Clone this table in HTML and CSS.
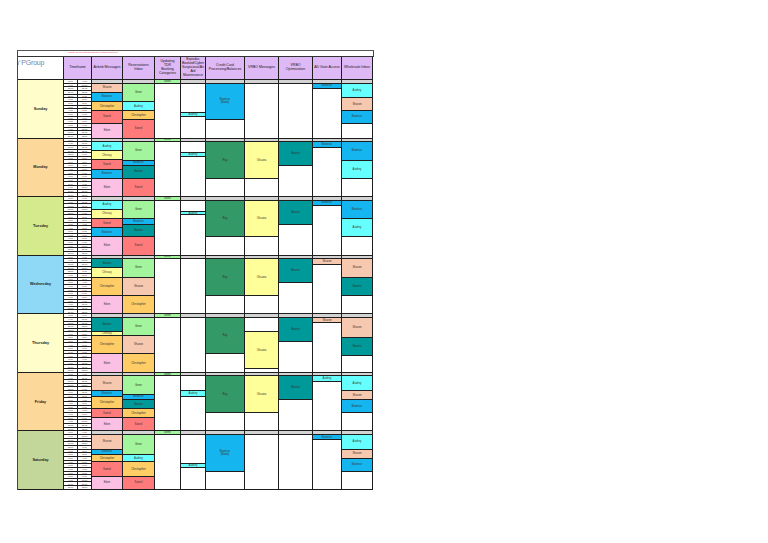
FILE: index.html
```html
<!DOCTYPE html>
<html lang="en">
<head>
<meta charset="utf-8">
<title>Weekly Inbox Schedule</title>
<link rel="stylesheet" href="styles.css">
</head>
<body>
<div class="page">
<div class="sheet">
  <div class="title-row"><span class="note">Please do not edit this schedule without approval</span></div>

  <div class="head cols">
    <div class="logo">
      <svg class="swoosh" viewBox="0 0 6 10" width="3" height="6"><path d="M1 9 L1 4 C1 1.5 3 0.8 5.5 1" fill="none" stroke="#6f88ab" stroke-width="1.1"/></svg>
      <span class="brand">PGroup</span>
    </div>
    <div>Timeframe</div>
    <div>Airbnb Messages</div>
    <div>Reservations<br>Inbox</div>
    <div>Updating<br>TDR<br>Booking<br>Categories</div>
    <div>Expedia:<br>Booked/Cyber<br>Suspicious/Air Aid<br>Maintenance</div>
    <div>Credit Card<br>Processing/Balances</div>
    <div>VRBO Messages</div>
    <div>VRBO<br>Optimization</div>
    <div>AD Gate Access</div>
    <div>Wholesale Inbox</div>
  </div>

  <!-- SUNDAY -->
  <div class="day cols">
    <div class="name sun">Sunday</div>
    <div class="times">
      <div class="t"><span>8:00</span><span>9:00</span></div><div class="t"><span>9:00</span><span>10:00</span></div><div class="t"><span>10:00</span><span>11:00</span></div><div class="t"><span>11:00</span><span>12:00</span></div><div class="t"><span>12:00</span><span>1:00</span></div><div class="t"><span>1:00</span><span>2:00</span></div><div class="t"><span>2:00</span><span>3:00</span></div><div class="t"><span>3:00</span><span>4:00</span></div><div class="t"><span>4:00</span><span>5:00</span></div><div class="t"><span>5:00</span><span>6:00</span></div><div class="t"><span>6:00</span><span>7:00</span></div><div class="t"><span>7:00</span><span>8:00</span></div><div class="t"><span>8:00</span><span>9:00</span></div><div class="t"><span>9:00</span><span>10:00</span></div><div class="t"><span>10:00</span><span>11:00</span></div><div class="t"><span>11:00</span><span>12:00</span></div>
    </div>
    <div class="col"><div class="c g s2"></div><div class="c pe s5">Sharon</div><div class="c bl s5">Beatrice</div><div class="c or s5">Christopher</div><div class="c rd s7">Saniel</div><div class="c pk s8">Eden</div></div>
    <div class="col"><div class="c g s2"></div><div class="c gn s10">Gene</div><div class="c cy s5">Audrey</div><div class="c or s5">Christopher</div><div class="c rd s10">Saniel</div></div>
    <div class="col"><div class="c gn s2">Gene</div><div class="c s30"></div></div>
    <div class="col"><div class="c g s2"></div><div class="c s16"></div><div class="c cy s2">Audrey</div><div class="c s12"></div></div>
    <div class="col"><div class="c g s2"></div><div class="c bl s20">Beatrice<br>(Book)</div><div class="c s10"></div></div>
    <div class="col"><div class="c g s2"></div><div class="c s30"></div></div>
    <div class="col"><div class="c g s2"></div><div class="c s30"></div></div>
    <div class="col"><div class="c g s2"></div><div class="c bl s3">Beatrice</div><div class="c s27"></div></div>
    <div class="col"><div class="c g s2"></div><div class="c cy s8">Audrey</div><div class="c pe s7">Sharon</div><div class="c bl s7">Beatrice</div><div class="c s8"></div></div>
  </div>

  <!-- MONDAY -->
  <div class="day cols">
    <div class="name mon">Monday</div>
    <div class="times">
      <div class="t"><span>8:00</span><span>9:00</span></div><div class="t"><span>9:00</span><span>10:00</span></div><div class="t"><span>10:00</span><span>11:00</span></div><div class="t"><span>11:00</span><span>12:00</span></div><div class="t"><span>12:00</span><span>1:00</span></div><div class="t"><span>1:00</span><span>2:00</span></div><div class="t"><span>2:00</span><span>3:00</span></div><div class="t"><span>3:00</span><span>4:00</span></div><div class="t"><span>4:00</span><span>5:00</span></div><div class="t"><span>5:00</span><span>6:00</span></div><div class="t"><span>6:00</span><span>7:00</span></div><div class="t"><span>7:00</span><span>8:00</span></div><div class="t"><span>8:00</span><span>9:00</span></div><div class="t"><span>9:00</span><span>10:00</span></div><div class="t"><span>10:00</span><span>11:00</span></div><div class="t"><span>11:00</span><span>12:00</span></div>
    </div>
    <div class="col"><div class="c g s2"></div><div class="c cy s5">Audrey</div><div class="c ye s5">Chrissy</div><div class="c rd s5">Saniel</div><div class="c bl s5">Beatrice</div><div class="c pk s10">Eden</div></div>
    <div class="col"><div class="c g s2"></div><div class="c gn s10">Gene</div><div class="c bl s3">Beatrice</div><div class="c te s7">Beatrix</div><div class="c rd s10">Saniel</div></div>
    <div class="col"><div class="c gn s2">Gene</div><div class="c s30"></div></div>
    <div class="col"><div class="c g s2"></div><div class="c s6"></div><div class="c cy s2">Audrey</div><div class="c s22"></div></div>
    <div class="col"><div class="c g s2"></div><div class="c dg s20">Ray</div><div class="c s10"></div></div>
    <div class="col"><div class="c g s2"></div><div class="c ye s20">Oksana</div><div class="c s10"></div></div>
    <div class="col"><div class="c g s2"></div><div class="c te s13">Beatrix</div><div class="c s17"></div></div>
    <div class="col"><div class="c g s2"></div><div class="c bl s3">Beatrice</div><div class="c s27"></div></div>
    <div class="col"><div class="c g s2"></div><div class="c bl s10">Beatrice</div><div class="c cy s10">Audrey</div><div class="c s10"></div></div>
  </div>

  <!-- TUESDAY -->
  <div class="day cols">
    <div class="name tue">Tuesday</div>
    <div class="times">
      <div class="t"><span>8:00</span><span>9:00</span></div><div class="t"><span>9:00</span><span>10:00</span></div><div class="t"><span>10:00</span><span>11:00</span></div><div class="t"><span>11:00</span><span>12:00</span></div><div class="t"><span>12:00</span><span>1:00</span></div><div class="t"><span>1:00</span><span>2:00</span></div><div class="t"><span>2:00</span><span>3:00</span></div><div class="t"><span>3:00</span><span>4:00</span></div><div class="t"><span>4:00</span><span>5:00</span></div><div class="t"><span>5:00</span><span>6:00</span></div><div class="t"><span>6:00</span><span>7:00</span></div><div class="t"><span>7:00</span><span>8:00</span></div><div class="t"><span>8:00</span><span>9:00</span></div><div class="t"><span>9:00</span><span>10:00</span></div><div class="t"><span>10:00</span><span>11:00</span></div><div class="t"><span>11:00</span><span>12:00</span></div>
    </div>
    <div class="col"><div class="c g s2"></div><div class="c cy s5">Audrey</div><div class="c ye s5">Chrissy</div><div class="c rd s5">Saniel</div><div class="c bl s5">Beatrice</div><div class="c pk s10">Eden</div></div>
    <div class="col"><div class="c g s2"></div><div class="c gn s10">Gene</div><div class="c bl s3">Beatrice</div><div class="c te s7">Beatrix</div><div class="c rd s10">Saniel</div></div>
    <div class="col"><div class="c gn s2">Gene</div><div class="c s30"></div></div>
    <div class="col"><div class="c g s2"></div><div class="c s6"></div><div class="c cy s2">Audrey</div><div class="c s22"></div></div>
    <div class="col"><div class="c g s2"></div><div class="c dg s20">Ray</div><div class="c s10"></div></div>
    <div class="col"><div class="c g s2"></div><div class="c ye s20">Oksana</div><div class="c s10"></div></div>
    <div class="col"><div class="c g s2"></div><div class="c te s13">Beatrix</div><div class="c s17"></div></div>
    <div class="col"><div class="c g s2"></div><div class="c bl s3">Beatrice</div><div class="c s27"></div></div>
    <div class="col"><div class="c g s2"></div><div class="c bl s10">Beatrice</div><div class="c cy s10">Audrey</div><div class="c s10"></div></div>
  </div>

  <!-- WEDNESDAY -->
  <div class="day cols">
    <div class="name wed">Wednesday</div>
    <div class="times">
      <div class="t"><span>8:00</span><span>9:00</span></div><div class="t"><span>9:00</span><span>10:00</span></div><div class="t"><span>10:00</span><span>11:00</span></div><div class="t"><span>11:00</span><span>12:00</span></div><div class="t"><span>12:00</span><span>1:00</span></div><div class="t"><span>1:00</span><span>2:00</span></div><div class="t"><span>2:00</span><span>3:00</span></div><div class="t"><span>3:00</span><span>4:00</span></div><div class="t"><span>4:00</span><span>5:00</span></div><div class="t"><span>5:00</span><span>6:00</span></div><div class="t"><span>6:00</span><span>7:00</span></div><div class="t"><span>7:00</span><span>8:00</span></div><div class="t"><span>8:00</span><span>9:00</span></div><div class="t"><span>9:00</span><span>10:00</span></div><div class="t"><span>10:00</span><span>11:00</span></div><div class="t"><span>11:00</span><span>12:00</span></div>
    </div>
    <div class="col"><div class="c g s2"></div><div class="c te s5">Beatrix</div><div class="c ye s5">Chrissy</div><div class="c or s10">Christopher</div><div class="c pk s10">Eden</div></div>
    <div class="col"><div class="c g s2"></div><div class="c gn s10">Gene</div><div class="c pe s10">Sharon</div><div class="c or s10">Christopher</div></div>
    <div class="col"><div class="c gn s2">Gene</div><div class="c s30"></div></div>
    <div class="col"><div class="c g s2"></div><div class="c s30"></div></div>
    <div class="col"><div class="c g s2"></div><div class="c dg s20">Ray</div><div class="c s10"></div></div>
    <div class="col"><div class="c g s2"></div><div class="c ye s20">Oksana</div><div class="c s10"></div></div>
    <div class="col"><div class="c g s2"></div><div class="c te s13">Beatrix</div><div class="c s17"></div></div>
    <div class="col"><div class="c g s2"></div><div class="c pe s3">Sharon</div><div class="c s27"></div></div>
    <div class="col"><div class="c g s2"></div><div class="c pe s10">Sharon</div><div class="c te s10">Beatrix</div><div class="c s10"></div></div>
  </div>

  <!-- THURSDAY -->
  <div class="day cols">
    <div class="name thu">Thursday</div>
    <div class="times">
      <div class="t"><span>8:00</span><span>9:00</span></div><div class="t"><span>9:00</span><span>10:00</span></div><div class="t"><span>10:00</span><span>11:00</span></div><div class="t"><span>11:00</span><span>12:00</span></div><div class="t"><span>12:00</span><span>1:00</span></div><div class="t"><span>1:00</span><span>2:00</span></div><div class="t"><span>2:00</span><span>3:00</span></div><div class="t"><span>3:00</span><span>4:00</span></div><div class="t"><span>4:00</span><span>5:00</span></div><div class="t"><span>5:00</span><span>6:00</span></div><div class="t"><span>6:00</span><span>7:00</span></div><div class="t"><span>7:00</span><span>8:00</span></div><div class="t"><span>8:00</span><span>9:00</span></div><div class="t"><span>9:00</span><span>10:00</span></div><div class="t"><span>10:00</span><span>11:00</span></div><div class="t"><span>11:00</span><span>12:00</span></div>
    </div>
    <div class="col"><div class="c g s2"></div><div class="c te s8">Beatrix</div><div class="c ye s2">Chrissy</div><div class="c or s10">Christopher</div><div class="c pk s10">Eden</div></div>
    <div class="col"><div class="c g s2"></div><div class="c gn s10">Gene</div><div class="c pe s10">Sharon</div><div class="c or s10">Christopher</div></div>
    <div class="col"><div class="c gn s2">Gene</div><div class="c s30"></div></div>
    <div class="col"><div class="c g s2"></div><div class="c s30"></div></div>
    <div class="col"><div class="c g s2"></div><div class="c dg s20">Ray</div><div class="c s10"></div></div>
    <div class="col"><div class="c g s2"></div><div class="c s8"></div><div class="c ye s20">Oksana</div><div class="c s2"></div></div>
    <div class="col"><div class="c g s2"></div><div class="c te s13">Beatrix</div><div class="c s17"></div></div>
    <div class="col"><div class="c g s2"></div><div class="c pe s3">Sharon</div><div class="c s27"></div></div>
    <div class="col"><div class="c g s2"></div><div class="c pe s11">Sharon</div><div class="c te s10">Beatrix</div><div class="c s9"></div></div>
  </div>

  <!-- FRIDAY -->
  <div class="day cols">
    <div class="name fri">Friday</div>
    <div class="times">
      <div class="t"><span>8:00</span><span>9:00</span></div><div class="t"><span>9:00</span><span>10:00</span></div><div class="t"><span>10:00</span><span>11:00</span></div><div class="t"><span>11:00</span><span>12:00</span></div><div class="t"><span>12:00</span><span>1:00</span></div><div class="t"><span>1:00</span><span>2:00</span></div><div class="t"><span>2:00</span><span>3:00</span></div><div class="t"><span>3:00</span><span>4:00</span></div><div class="t"><span>4:00</span><span>5:00</span></div><div class="t"><span>5:00</span><span>6:00</span></div><div class="t"><span>6:00</span><span>7:00</span></div><div class="t"><span>7:00</span><span>8:00</span></div><div class="t"><span>8:00</span><span>9:00</span></div><div class="t"><span>9:00</span><span>10:00</span></div><div class="t"><span>10:00</span><span>11:00</span></div><div class="t"><span>11:00</span><span>12:00</span></div>
    </div>
    <div class="col"><div class="c g s2"></div><div class="c pe s8">Sharon</div><div class="c bl s3">Beatrice</div><div class="c or s7">Christopher</div><div class="c rd s5">Saniel</div><div class="c pk s7">Eden</div></div>
    <div class="col"><div class="c g s2"></div><div class="c gn s10">Gene</div><div class="c bl s3">Beatrice</div><div class="c te s5">Beatrix</div><div class="c or s5">Christopher</div><div class="c rd s7">Saniel</div></div>
    <div class="col"><div class="c gn s2">Gene</div><div class="c s30"></div></div>
    <div class="col"><div class="c g s2"></div><div class="c s8"></div><div class="c cy s3">Audrey</div><div class="c s19"></div></div>
    <div class="col"><div class="c g s2"></div><div class="c dg s20">Ray</div><div class="c s10"></div></div>
    <div class="col"><div class="c g s2"></div><div class="c ye s20">Oksana</div><div class="c s10"></div></div>
    <div class="col"><div class="c g s2"></div><div class="c te s13">Beatrix</div><div class="c s17"></div></div>
    <div class="col"><div class="c g s2"></div><div class="c cy s3">Audrey</div><div class="c s27"></div></div>
    <div class="col"><div class="c g s2"></div><div class="c cy s8">Audrey</div><div class="c pe s5">Sharon</div><div class="c bl s7">Beatrice</div><div class="c s10"></div></div>
  </div>

  <!-- SATURDAY -->
  <div class="day cols">
    <div class="name sat">Saturday</div>
    <div class="times">
      <div class="t"><span>8:00</span><span>9:00</span></div><div class="t"><span>9:00</span><span>10:00</span></div><div class="t"><span>10:00</span><span>11:00</span></div><div class="t"><span>11:00</span><span>12:00</span></div><div class="t"><span>12:00</span><span>1:00</span></div><div class="t"><span>1:00</span><span>2:00</span></div><div class="t"><span>2:00</span><span>3:00</span></div><div class="t"><span>3:00</span><span>4:00</span></div><div class="t"><span>4:00</span><span>5:00</span></div><div class="t"><span>5:00</span><span>6:00</span></div><div class="t"><span>6:00</span><span>7:00</span></div><div class="t"><span>7:00</span><span>8:00</span></div><div class="t"><span>8:00</span><span>9:00</span></div><div class="t"><span>9:00</span><span>10:00</span></div><div class="t"><span>10:00</span><span>11:00</span></div><div class="t"><span>11:00</span><span>12:00</span></div>
    </div>
    <div class="col"><div class="c g s2"></div><div class="c pe s8">Sharon</div><div class="c bl s3">Beatrice</div><div class="c or s4">Christopher</div><div class="c rd s8">Saniel</div><div class="c pk s7">Eden</div></div>
    <div class="col"><div class="c g s2"></div><div class="c gn s11">Gene</div><div class="c cy s4">Audrey</div><div class="c or s8">Christopher</div><div class="c rd s7">Saniel</div></div>
    <div class="col"><div class="c gn s2">Gene</div><div class="c s30"></div></div>
    <div class="col"><div class="c g s2"></div><div class="c s16"></div><div class="c cy s2">Audrey</div><div class="c s12"></div></div>
    <div class="col"><div class="c g s2"></div><div class="c bl s20">Beatrice<br>(Book)</div><div class="c s10"></div></div>
    <div class="col"><div class="c g s2"></div><div class="c s30"></div></div>
    <div class="col"><div class="c g s2"></div><div class="c s30"></div></div>
    <div class="col"><div class="c g s2"></div><div class="c bl s3">Beatrice</div><div class="c s27"></div></div>
    <div class="col"><div class="c g s2"></div><div class="c cy s8">Audrey</div><div class="c pe s5">Sharon</div><div class="c bl s7">Beatrice</div><div class="c s10"></div></div>
  </div>
</div>
</div>
</body>
</html>
```

FILE: styles.css
```css
* { box-sizing: border-box; }

body {
  margin: 0;
  background: #ffffff;
  font-family: "Liberation Sans", Arial, sans-serif;
  color: #222;
}

.page {
  padding: 50px 0 0 17px;
  --hr: 1.83px;
  --line: #1e1e1e;
}

.sheet {
  width: 357px;
  border-left: 1px solid #444;
  border-top: 1px solid #555;
}

.title-row {
  height: 6px;
  border-right: 1px solid #444;
  border-bottom: 1px solid #333;
  padding: 0.4px 0 0 50px;
}

.note {
  display: block;
  color: #e23a3a;
  font-size: 2.3px;
  line-height: 2.6px;
  white-space: nowrap;
}

.cols {
  display: grid;
  grid-template-columns: 46px 28px 31px 32px 26px 25px 39px 34px 34px 29px 31px;
}

/* header */
.head { height: 23px; }

.head > div {
  border-right: 1px solid var(--line);
  border-bottom: 1px solid var(--line);
  background: #dfb8f6;
  display: flex;
  align-items: center;
  justify-content: center;
  text-align: center;
  font-size: 3.5px;
  line-height: 3.9px;
  color: #1a1a1a;
}

.head > .logo {
  background: #ffffff;
  justify-content: flex-start;
  align-items: flex-start;
  padding: 2px 0 0 0;
  gap: 0.3px;
}

.swoosh { display: block; margin-top: 0.6px; }

.brand {
  font-size: 7px;
  line-height: 7px;
  color: #6f88ab;
  letter-spacing: -0.2px;
}

/* day blocks */
.day { height: calc(var(--hr) * 32); }

.name {
  border-right: 1px solid var(--line);
  border-bottom: 1px solid var(--line);
  display: flex;
  align-items: center;
  justify-content: center;
  font-size: 3.8px;
  font-weight: bold;
  color: #222;
}

.sun, .thu { background: #fffdc9; }
.mon, .fri { background: #fdd89b; }
.tue { background: #d5ea8d; }
.wed { background: #8fd9f6; }
.sat { background: #c4d79b; }

.times {
  border-right: 1px solid var(--line);
  display: flex;
  flex-direction: column;
}

.t {
  height: calc(var(--hr) * 2);
  border-bottom: 1px solid var(--line);
  display: flex;
  font-size: 2.3px;
  line-height: 1;
  color: #333;
  background: #ffffff;
}

.t span {
  flex: 1;
  display: flex;
  align-items: center;
  justify-content: center;
  overflow: hidden;
}

.t span:first-child { border-right: 1px solid var(--line); }

.col {
  border-right: 1px solid var(--line);
  display: flex;
  flex-direction: column;
}

.c {
  height: calc(var(--hr) * var(--n));
  border-bottom: 1px solid var(--line);
  display: flex;
  align-items: center;
  justify-content: center;
  text-align: center;
  font-size: 2.8px;
  line-height: 3px;
  color: #333;
  background: #ffffff;
  overflow: hidden;
}

.s2 { --n: 2; }
.s3 { --n: 3; }
.s4 { --n: 4; }
.s5 { --n: 5; }
.s6 { --n: 6; }
.s7 { --n: 7; }
.s8 { --n: 8; }
.s9 { --n: 9; }
.s10 { --n: 10; }
.s11 { --n: 11; }
.s12 { --n: 12; }
.s13 { --n: 13; }
.s16 { --n: 16; }
.s17 { --n: 17; }
.s19 { --n: 19; }
.s20 { --n: 20; }
.s22 { --n: 22; }
.s27 { --n: 27; }
.s30 { --n: 30; }

/* colours */
.g  { background: #d3d3d3; }
.pe { background: #f6c8b0; }
.bl { background: #15b5f0; }
.or { background: #ffcc66; }
.rd { background: #ff7b7b; }
.pk { background: #fdc0e5; }
.gn { background: #a2f59d; }
.cy { background: #66ffff; }
.ye { background: #ffff99; }
.te { background: #009999; }
.dg { background: #339966; }
```
